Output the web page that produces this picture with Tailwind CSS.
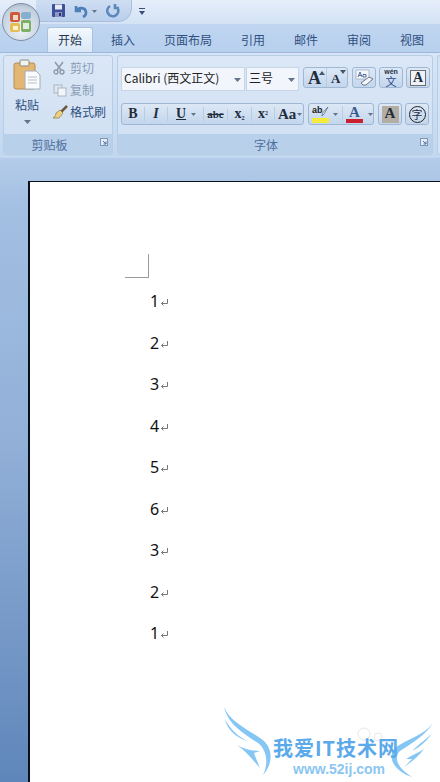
<!DOCTYPE html>
<html lang="zh-CN">
<head>
  <meta charset="UTF-8">
  <meta name="viewport" content="width=device-width, initial-scale=1.0">
  <title>Word</title>
  <script src="https://cdn.jsdelivr.net/npm/@tailwindcss/browser@4"></script>
</head>
<body class="w-[440px] h-[782px] overflow-hidden relative bg-[#a9c4e4] font-['Noto_Sans_CJK_SC','Liberation_Sans',sans-serif] text-[#2f4f80]">

  <!-- Office button -->
  <div class="absolute left-[2px] top-[3px] w-[38px] h-[38px] rounded-full bg-[radial-gradient(circle_at_50%_70%,#eef3f8,#c3d0de_70%,#8c9db2)] border border-[#7f8fa6] flex items-center justify-center z-10">
    <svg width="24" height="24" viewBox="0 0 24 24">
      <rect x="1" y="2" width="10" height="10" rx="2" fill="#cf5a3a"/>
      <rect x="12" y="2" width="10" height="7" rx="2" fill="#86afd0"/>
      <rect x="1" y="13" width="10" height="9" rx="2" fill="#e4bd55"/>
      <rect x="12" y="10" width="10" height="12" rx="2" fill="#7db066"/>
      <rect x="4" y="5" width="5" height="5" fill="#efd9c8"/>
      <rect x="14" y="13" width="6" height="6" fill="#dfeedd"/>
      <rect x="4" y="16" width="5" height="4" fill="#fbf1cf"/>
    </svg>
  </div>

  <!-- Quick access bar -->
  <div class="h-[24px] bg-[linear-gradient(#e6eefa,#d3e2f5)] flex items-start pl-[36px]">
    <div class="h-[22px] w-[96px] rounded-br-[14px] bg-[linear-gradient(#cfdef2,#b9cfeb)] border-b border-r border-[#a9bfdc] flex items-center pl-[15px] gap-[7px]">
      <svg width="15" height="15" viewBox="0 0 15 15">
        <rect x="1" y="1" width="13" height="13" rx="1" fill="#3f4f9a"/>
        <rect x="4" y="1.500" width="7" height="5" fill="#e8edf5"/>
        <rect x="4" y="9" width="7" height="5" fill="#8d97c4"/>
        <rect x="8" y="10" width="2" height="3" fill="#2b3570"/>
      </svg>
      <svg width="26" height="14" viewBox="0 0 26 14">
        <path d="M3 2v5h5M3 7c3-4 9-4 10 1 .3 2-1 4-3 5" fill="none" stroke="#4d7fb8" stroke-width="2.600"/>
        <path d="M19 6h5l-2.500 3z" fill="#64748b"/>
      </svg>
      <svg width="15" height="15" viewBox="0 0 15 15">
        <path d="M4 3a5.500 5.500 0 1 0 8 3M9 1v4h4" fill="none" stroke="#5c88bd" stroke-width="2.600"/>
      </svg>
    </div>
    <svg class="ml-[6px] mt-[7px]" width="8" height="9" viewBox="0 0 8 9">
      <path d="M1 1h6v1H1zM1 4h6L4 8z" fill="#36507a"/>
    </svg>
  </div>

  <!-- Tabs -->
  <div class="h-[28px] bg-[linear-gradient(#c0d6f0,#b7d0ee)] flex items-end text-[12px] leading-none">
    <div class="ml-[47px] w-[46px] h-[25px] rounded-t-[3px] bg-[linear-gradient(#f3f8fd,#d9e7f6)] border border-b-0 border-[#a8c2e0] flex items-center justify-center text-[#26374f]">开始</div>
    <div class="ml-[18px] h-[25px] flex items-center">插入</div>
    <div class="ml-[29px] h-[25px] flex items-center">页面布局</div>
    <div class="ml-[29px] h-[25px] flex items-center">引用</div>
    <div class="ml-[29px] h-[25px] flex items-center">邮件</div>
    <div class="ml-[29px] h-[25px] flex items-center">审阅</div>
    <div class="ml-[29px] h-[25px] flex items-center">视图</div>
  </div>

  <!-- Ribbon -->
  <div class="h-[106px] bg-[linear-gradient(#d7e5f6,#c2d7f0)] border-t border-[#9db8d8] flex pt-[2px] pl-[3px] gap-[4px] overflow-hidden">
    <!-- Clipboard group -->
    <div class="w-[110px] shrink-0 h-[100px] rounded-[3px] border border-[#b6cde6] bg-[linear-gradient(#dbe7f6,#cfdff2)] flex flex-col">
      <div class="h-[79px] flex pl-[6px]">
        <div class="w-[34px] flex flex-col items-center pt-[3px]">
          <svg width="28" height="31" viewBox="0 0 28 31">
            <rect x="1" y="4" width="21" height="26" rx="2" fill="#e3b673" stroke="#b98d4e"/>
            <rect x="7" y="1" width="9" height="6" rx="1" fill="#f2f2ee" stroke="#8b8b80"/>
            <path d="M12 12h11l4 4v14H12z" fill="#fafbfd" stroke="#a3aebc"/>
            <path d="M15 18h9M15 21h9M15 24h9" stroke="#b7c0cc"/>
          </svg>
          <span class="text-[12px] leading-none mt-[9px]">粘贴</span>
          <svg class="mt-[9px]" width="7" height="4" viewBox="0 0 7 4"><path d="M0 0h7L3.500 4z" fill="#64748b"/></svg>
        </div>
        <div class="flex flex-col pl-[9px] pt-[1px] text-[12px] leading-none">
          <div class="h-[22px] flex items-center gap-[5px] text-[#8a9db5]">
            <svg width="12" height="14" viewBox="0 0 12 14"><path d="M2 1l6 8M10 1L4 9" stroke="#8e99a8" stroke-width="1.500"/><circle cx="3" cy="11" r="2" fill="none" stroke="#8e99a8" stroke-width="1.300"/><circle cx="9" cy="11" r="2" fill="none" stroke="#8e99a8" stroke-width="1.300"/></svg>
            <span>剪切</span>
          </div>
          <div class="h-[22px] flex items-center gap-[3px] text-[#8a9db5]">
            <svg width="14" height="13" viewBox="0 0 14 13"><rect x="1" y="1" width="8" height="8" fill="#dfe6ee" stroke="#aab6c4"/><rect x="5" y="4" width="8" height="8" fill="#f2f5f9" stroke="#aab6c4"/></svg>
            <span>复制</span>
          </div>
          <div class="h-[22px] flex items-center gap-[2px] -ml-[1px] text-[#2f4f80]">
            <svg width="16" height="15" viewBox="0 0 16 15"><path d="M15 1L9 7" stroke="#6d5a3c" stroke-width="2.500"/><path d="M8 5l3 3-4 5-6 0c2-1 3-3 3-5z" fill="#ecd27e" stroke="#8a7540" stroke-width=".7"/></svg>
            <span>格式刷</span>
          </div>
        </div>
      </div>
      <div class="h-[20px] mt-auto rounded-b-[2px] bg-[#b9d0ea] relative flex items-center justify-center pt-[1px] pr-[17px] text-[12px] leading-none text-[#4d6f9e]">
        剪贴板
        <svg class="absolute right-[4px] top-[4px]" width="8" height="8" viewBox="0 0 8 8"><rect x=".5" y=".5" width="7" height="7" fill="#e4edf7" stroke="#7f97b5"/><path d="M3 3l3 3M6 3.500V6H3.500" fill="none" stroke="#4d6f9e"/></svg>
      </div>
    </div>

    <!-- Font group -->
    <div class="w-[316px] shrink-0 h-[100px] rounded-[3px] border border-[#b6cde6] bg-[linear-gradient(#dbe7f6,#cfdff2)] flex flex-col">
      <div class="pl-[3px] pt-[11px] flex items-start h-[35px]">
        <div class="w-[124px] h-[24px] bg-[#f2f6fc] border border-[#c5d6ea] flex items-center pl-[2px] pb-[2px] text-[12px] leading-none text-[#222] relative">
          Calibri (西文正文)
          <svg class="absolute right-[3px] top-[10px]" width="7" height="4" viewBox="0 0 7 4"><path d="M0 0h7L3.500 4z" fill="#64748b"/></svg>
        </div>
        <div class="ml-[1px] w-[53px] h-[24px] bg-[#f2f6fc] border border-[#c5d6ea] flex items-center pl-[2px] pb-[2px] text-[12px] leading-none text-[#222] relative">
          三号
          <svg class="absolute right-[3px] top-[10px]" width="7" height="4" viewBox="0 0 7 4"><path d="M0 0h7L3.500 4z" fill="#64748b"/></svg>
        </div>
        <div class="ml-[4px] w-[45px] h-[21px] rounded-[3px] border border-[#9fb7d4] bg-[linear-gradient(#dde8f6,#c3d6ec)] flex items-center font-['Liberation_Serif',serif] font-bold text-[#1f2d3d] leading-none">
          <span class="w-[23px] h-full pl-[4px] text-[18px] border-r border-[#b8cce2] flex items-center relative">A<svg class="absolute right-[1px] top-[3px]" width="6" height="4" viewBox="0 0 6 4"><path d="M0 4h6L3 0z" fill="#44546a"/></svg></span>
          <span class="w-[20px] pl-[4px] text-[13px] pt-[2px] relative">A<svg class="absolute right-[1px] top-[0px]" width="6" height="4" viewBox="0 0 6 4"><path d="M0 0h6L3 4z" fill="#44546a"/></svg></span>
        </div>
        <div class="ml-[4px] w-[24px] h-[21px] rounded-[3px] border border-[#9fb7d4] bg-[linear-gradient(#dde8f6,#c3d6ec)] flex items-center justify-center">
          <svg width="20" height="17" viewBox="0 0 20 17"><rect x="2" y="1" width="13" height="9" fill="#f4f7fb" stroke="#8a9cb4" stroke-width=".6"/><path d="M4 8l2-5 2 5M5 6.500h2M9 8h3V5.500H9z" fill="none" stroke="#2f4f80" stroke-width=".8"/><path d="M7 14l8-6 4 2-7 6H9z" fill="#f4f6fa" stroke="#66788f"/></svg>
        </div>
        <div class="ml-[3px] w-[24px] h-[21px] rounded-[3px] border border-[#9fb7d4] bg-[linear-gradient(#dde8f6,#c3d6ec)] flex flex-col items-center justify-center gap-[1px] text-[#2c4a8a]">
          <span class="font-['Liberation_Sans',sans-serif] text-[7px] leading-[7px] font-bold text-[#26324a]">wén</span>
          <span class="text-[11px] leading-[11px]">文</span>
        </div>
        <div class="ml-[3px] w-[24px] h-[21px] rounded-[3px] border border-[#9fb7d4] bg-[linear-gradient(#dde8f6,#c3d6ec)] flex items-center justify-center">
          <span class="w-[16px] h-[16px] border border-[#6e6e6e] bg-[#eef3f9] flex items-center justify-center font-['Liberation_Serif',serif] font-bold text-[14px] leading-none text-[#1f2d3d]">A</span>
        </div>
      </div>
      <div class="pl-[3px] mt-[12px] flex items-start h-[22px] font-['Liberation_Serif',serif] font-bold text-[#1f2d3d] leading-none">
        <div class="w-[183px] h-[22px] rounded-[3px] border border-[#9fb7d4] bg-[linear-gradient(#dde8f6,#c3d6ec)] flex items-center text-[14px]">
          <span class="w-[23px] text-center border-r border-[#b8cce2]">B</span>
          <span class="w-[23px] text-center italic border-r border-[#b8cce2]">I</span>
          <span class="w-[36px] border-r border-[#b8cce2] flex items-center gap-[5px] pl-[8px]"><span class="underline">U</span><svg width="5" height="3" viewBox="0 0 7 4"><path d="M0 0h7L3.500 4z" fill="#64748b"/></svg></span>
          <span class="w-[24px] text-center text-[11px] line-through border-r border-[#b8cce2]">abc</span>
          <span class="w-[24px] text-center border-r border-[#b8cce2]">x<sub class="text-[6px]">2</sub></span>
          <span class="w-[23px] text-center border-r border-[#b8cce2]">x<sup class="text-[6px]">2</sup></span>
          <span class="pl-[3px] text-[15px] flex items-center gap-[1px]">Aa<svg width="5" height="3" viewBox="0 0 7 4"><path d="M0 0h7L3.500 4z" fill="#64748b"/></svg></span>
        </div>
        <div class="ml-[4px] w-[66px] h-[22px] rounded-[3px] border border-[#9fb7d4] bg-[linear-gradient(#dde8f6,#c3d6ec)] flex items-center">
          <div class="w-[34px] flex items-center border-r border-[#b8cce2] pl-[3px] gap-[4px]">
            <span class="w-[17px] h-[17px] bg-[linear-gradient(transparent_70%,#f4ea3c_70%)] font-['Liberation_Sans',sans-serif] text-[9px] text-[#222] relative">ab<svg class="absolute left-[9px] top-0" width="9" height="11" viewBox="0 0 9 11"><path d="M7 1L3 8l-2 2 .5-3z" fill="#f2f5f9" stroke="#5b6b80" stroke-width=".8"/></svg></span>
            <svg width="5" height="3" viewBox="0 0 7 4"><path d="M0 0h7L3.500 4z" fill="#64748b"/></svg>
          </div>
          <div class="flex items-center pl-[3px] gap-[5px]">
            <span class="w-[17px] h-[18px] text-center text-[15px] text-[#3a5a94] border-b-[4px] border-[#c8202f]">A</span>
            <svg width="5" height="3" viewBox="0 0 7 4"><path d="M0 0h7L3.500 4z" fill="#64748b"/></svg>
          </div>
        </div>
        <div class="ml-[4px] w-[24px] h-[22px] rounded-[3px] border border-[#9fb7d4] bg-[linear-gradient(#dde8f6,#c3d6ec)] flex items-center justify-center">
          <span class="w-[17px] h-[17px] bg-[#b3ada2] text-center text-[15px]">A</span>
        </div>
        <div class="ml-[3px] w-[24px] h-[22px] rounded-[3px] border border-[#9fb7d4] bg-[linear-gradient(#dde8f6,#c3d6ec)] flex items-center justify-center">
          <span class="w-[17px] h-[17px] rounded-full border border-[#222] flex items-center justify-center font-['Noto_Sans_CJK_SC',sans-serif] font-normal text-[11px]">字</span>
        </div>
      </div>
      <div class="h-[20px] mt-auto rounded-b-[2px] bg-[#b9d0ea] relative flex items-center justify-center pt-[1px] pr-[18px] text-[12px] leading-none text-[#4d6f9e]">
        字体
        <svg class="absolute right-[4px] top-[4px]" width="8" height="8" viewBox="0 0 8 8"><rect x=".5" y=".5" width="7" height="7" fill="#e4edf7" stroke="#7f97b5"/><path d="M3 3l3 3M6 3.500V6H3.500" fill="none" stroke="#4d6f9e"/></svg>
      </div>
    </div>
    <div class="w-[10px] shrink-0 h-[100px] rounded-l-[3px] border border-r-0 border-[#b6cde6] bg-[#d3e2f4]"></div>
  </div>

  <!-- Workspace -->
  <div class="h-[624px] pl-[28px] pt-[23px] bg-[linear-gradient(#b4cce9,#a3bfe2_8%,#92b0d8_45%,#5f86ba)]">
    <div class="h-[601px] bg-white border-t border-l-2 border-[#0b0f18] pl-[95px] pt-[72px] relative">
      <!-- Margin crop mark -->
      <div class="w-[24px] h-[24px] border-r border-b border-[#9a9a9a]"></div>
      <!-- Paragraphs -->
      <div class="pl-[25px] font-['Noto_Sans','Liberation_Sans',sans-serif] text-[16px] leading-none text-[#111]">
        <p class="h-[41.5px] pt-[15px] flex items-start">1<svg class="mt-[5px] ml-[1px]" width="9" height="9" viewBox="0 0 9 9"><path d="M7.500 1v4.500H1.500M3.500 3.500l-2 2 2 2" fill="none" stroke="#777"/></svg></p>
        <p class="h-[41.5px] pt-[15px] flex items-start">2<svg class="mt-[5px] ml-[1px]" width="9" height="9" viewBox="0 0 9 9"><path d="M7.500 1v4.500H1.500M3.500 3.500l-2 2 2 2" fill="none" stroke="#777"/></svg></p>
        <p class="h-[41.5px] pt-[15px] flex items-start">3<svg class="mt-[5px] ml-[1px]" width="9" height="9" viewBox="0 0 9 9"><path d="M7.500 1v4.500H1.500M3.500 3.500l-2 2 2 2" fill="none" stroke="#777"/></svg></p>
        <p class="h-[41.5px] pt-[15px] flex items-start">4<svg class="mt-[5px] ml-[1px]" width="9" height="9" viewBox="0 0 9 9"><path d="M7.500 1v4.500H1.500M3.500 3.500l-2 2 2 2" fill="none" stroke="#777"/></svg></p>
        <p class="h-[41.5px] pt-[15px] flex items-start">5<svg class="mt-[5px] ml-[1px]" width="9" height="9" viewBox="0 0 9 9"><path d="M7.500 1v4.500H1.500M3.500 3.500l-2 2 2 2" fill="none" stroke="#777"/></svg></p>
        <p class="h-[41.5px] pt-[15px] flex items-start">6<svg class="mt-[5px] ml-[1px]" width="9" height="9" viewBox="0 0 9 9"><path d="M7.500 1v4.500H1.500M3.500 3.500l-2 2 2 2" fill="none" stroke="#777"/></svg></p>
        <p class="h-[41.5px] pt-[15px] flex items-start">3<svg class="mt-[5px] ml-[1px]" width="9" height="9" viewBox="0 0 9 9"><path d="M7.500 1v4.500H1.500M3.500 3.500l-2 2 2 2" fill="none" stroke="#777"/></svg></p>
        <p class="h-[41.5px] pt-[15px] flex items-start">2<svg class="mt-[5px] ml-[1px]" width="9" height="9" viewBox="0 0 9 9"><path d="M7.500 1v4.500H1.500M3.500 3.500l-2 2 2 2" fill="none" stroke="#777"/></svg></p>
        <p class="h-[41.5px] pt-[15px] flex items-start">1<svg class="mt-[5px] ml-[1px]" width="9" height="9" viewBox="0 0 9 9"><path d="M7.500 1v4.500H1.500M3.500 3.500l-2 2 2 2" fill="none" stroke="#777"/></svg></p>
      </div>
    </div>
  </div>

  <!-- Watermark -->
  <div class="absolute left-[222px] top-[705px] w-[218px] h-[77px]">
    <svg class="absolute inset-0" width="218" height="77" viewBox="0 0 218 77" fill="#86c6f4">
      <circle cx="142" cy="29" r="6" fill="none" stroke="#e8e8e8"/>
      <circle cx="156" cy="32" r="4" fill="none" stroke="#e8e8e8"/>
      <path d="M2 2C8 18 30 26 42 36 52 46 50 60 41 70 46 60 46 46 36 38 24 30 6 20 2 2Z"/>
      <path d="M3 14C8 24 16 32 26 36 18 34 6 28 3 14Z"/>
      <path d="M15 40C22 44 30 46 38 46L32 48C34 54 36 58 38 63 30 54 24 46 15 40Z"/>
      <path d="M211 18C204 30 190 38 178 46 172 52 174 62 190 72 172 66 164 52 174 42 186 34 202 30 211 18Z"/>
      <path d="M210 28C205 36 198 42 190 46 198 38 205 34 210 28Z"/>
      <path d="M202 44C196 48 190 50 184 54L190 54 182 62C188 58 196 52 202 44Z"/>
    </svg>
    <div class="absolute left-[51px] top-[33px] text-[20px] tracking-[1px] leading-none font-bold text-[#5aa9ea] whitespace-nowrap">我爱IT技术网</div>
    <div class="absolute left-[71px] top-[57px] font-['Liberation_Sans',sans-serif] text-[14px] leading-none font-bold text-[#8cc6f0] whitespace-nowrap">www.52ij.com</div>
  </div>
</body>
</html>
